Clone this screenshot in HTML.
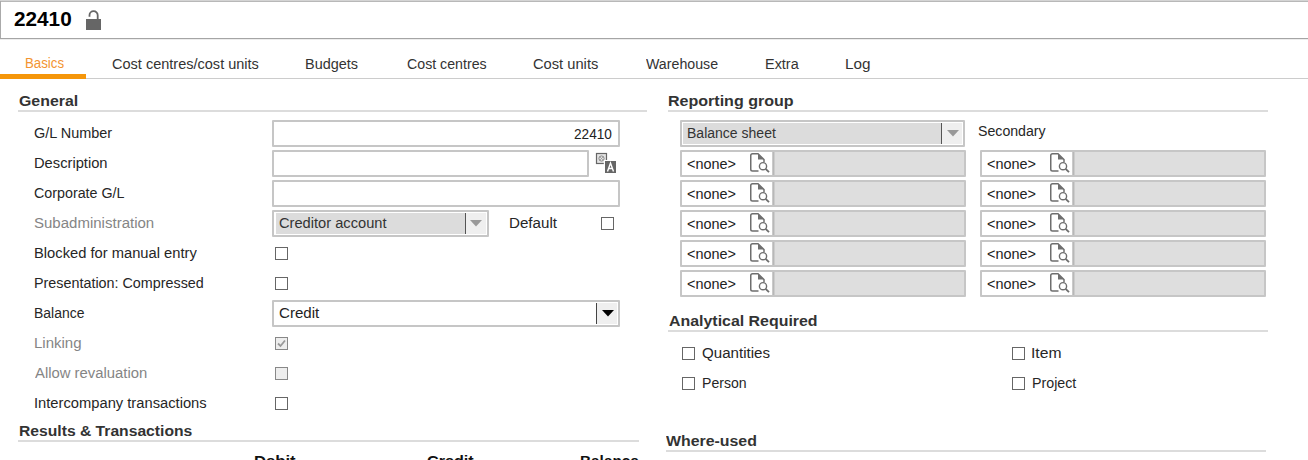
<!DOCTYPE html>
<html><head><meta charset="utf-8"><style>
html,body{margin:0;padding:0;background:#fff;width:1308px;height:460px;overflow:hidden;position:relative}
.tx{position:absolute;font-family:"Liberation Sans", sans-serif;line-height:1;white-space:nowrap;transform-origin:0 0}
.r{position:absolute}
</style></head><body>
<div class='r' style='left:0px;top:0px;width:1308px;height:1px;background:#d4d4d4;'></div>
<div class='r' style='left:0px;top:1px;width:1308px;height:1px;background:#b8b8b8;'></div>
<div class='r' style='left:0px;top:1px;width:1px;height:38px;background:#aaaaaa;'></div>
<div class='r' style='left:0px;top:38px;width:1308px;height:1px;background:#a5a5a5;'></div>
<div class='r' style='left:0px;top:39px;width:1308px;height:1px;background:#ededed;'></div>
<svg class='r' style='left:84px;top:8px' width='20' height='24' viewBox='0 0 20 24'>
<path d='M5.5 8.7 V7.3 A4.1 4.1 0 0 1 13.7 7.3 V11' fill='none' stroke='#666' stroke-width='1.8'/>
<rect x='2' y='11' width='15' height='11' fill='#666'/></svg>
<div class='r' style='left:86px;top:78px;width:1222px;height:1px;background:#cccccc;'></div>
<div class='r' style='left:0px;top:74px;width:86px;height:5px;background:#f5960a;'></div>
<div class='r' style='left:18px;top:110px;width:629px;height:2px;background:#dcdcdc;'></div>
<div class='r' style='left:668px;top:110px;width:600px;height:2px;background:#dcdcdc;'></div>
<div class='r' style='left:18px;top:440px;width:621px;height:2px;background:#dcdcdc;'></div>
<div class='r' style='left:668px;top:330px;width:600px;height:2px;background:#dcdcdc;'></div>
<div class='r' style='left:666px;top:450px;width:600px;height:2px;background:#dcdcdc;'></div>
<div class='r' style='left:272px;top:120px;width:344px;height:23px;border:2px solid #c6c6c6;background:#fff;border-radius:1px'></div>
<div class='r' style='left:272px;top:150px;width:313px;height:23px;border:2px solid #c6c6c6;background:#fff;border-radius:1px'></div>
<div class='r' style='left:272px;top:180px;width:344px;height:23px;border:2px solid #c6c6c6;background:#fff;border-radius:1px'></div>
<div class='r' style='left:272px;top:210px;width:213px;height:23px;border:2px solid #c6c6c6;background:#fff;border-radius:1px'></div>
<div class='r' style='left:276px;top:213px;width:189px;height:21px;background:#dcdcdc;'></div>
<div class='r' style='left:465px;top:213px;width:1px;height:21px;background:#555;'></div>
<div class='r' style='left:466px;top:213px;width:20px;height:21px;background:#efefef;'></div>
<svg class='r' style='left:470px;top:220px' width='12' height='7' viewBox='0 0 12 7'><path d='M0 0 H12 L6 6.5 Z' fill='#999'/></svg>
<svg class='r' style='left:595px;top:152px' width='22' height='22' viewBox='0 0 22 22'>
<rect x='1.5' y='1.5' width='10' height='10' fill='#e4e4e4' stroke='#666' stroke-width='1.2'/>
<circle cx='6.5' cy='6.5' r='2.6' fill='none' stroke='#888' stroke-width='1'/><path d='M4.5 4.5 L8.5 8.5 M8.5 4.5 L4.5 8.5' stroke='#999' stroke-width='0.8'/>
<rect x='8.8' y='8' width='13' height='14' fill='#fff'/>
<rect x='10' y='9' width='11' height='12' fill='#666'/>
<path d='M12.5 19.5 L15.5 11 L18.5 19.5 M13.6 16.5 H17.4' stroke='#fff' stroke-width='1.4' fill='none'/></svg>
<div class='r' style='left:601px;top:217px;width:11px;height:11px;border:1px solid #666;background:#fff'></div>
<div class='r' style='left:275px;top:247px;width:11px;height:11px;border:1px solid #666;background:#fff'></div>
<div class='r' style='left:275px;top:277px;width:11px;height:11px;border:1px solid #666;background:#fff'></div>
<div class='r' style='left:275px;top:337px;width:11px;height:11px;border:1px solid #888;background:#eee'></div>
<svg class='r' style='left:276px;top:338px' width='11' height='11' viewBox='0 0 11 11'><path d='M2 5.5 L4.5 8 L9 2.5' stroke='#999' stroke-width='1.8' fill='none'/></svg>
<div class='r' style='left:275px;top:367px;width:11px;height:11px;border:1px solid #888;background:#eee'></div>
<div class='r' style='left:275px;top:397px;width:11px;height:11px;border:1px solid #666;background:#fff'></div>
<div class='r' style='left:272px;top:300px;width:344px;height:23px;border:2px solid #c6c6c6;background:#fff;border-radius:1px'></div>
<div class='r' style='left:596px;top:303px;width:1px;height:21px;background:#444;'></div>
<div class='r' style='left:597px;top:303px;width:20px;height:21px;background:#efefef;'></div>
<svg class='r' style='left:602px;top:310px' width='12' height='7' viewBox='0 0 12 7'><path d='M0 0 H12 L6 6.5 Z' fill='#000'/></svg>
<div class='r' style='left:680px;top:120px;width:281px;height:23px;border:2px solid #c6c6c6;background:#fff;border-radius:1px'></div>
<div class='r' style='left:683px;top:123px;width:258px;height:21px;background:#dcdcdc;'></div>
<div class='r' style='left:941px;top:123px;width:1px;height:21px;background:#555;'></div>
<div class='r' style='left:942px;top:123px;width:20px;height:21px;background:#efefef;'></div>
<svg class='r' style='left:947px;top:130px' width='12' height='7' viewBox='0 0 12 7'><path d='M0 0 H12 L6 6.5 Z' fill='#999'/></svg>
<div class='r' style='left:680px;top:150px;width:282px;height:23px;border:2px solid #c6c6c6;background:#fff;border-radius:1px'></div>
<div class='r' style='left:772px;top:152px;width:1px;height:23px;background:#cacaca;'></div>
<div class='r' style='left:773px;top:152px;width:1px;height:23px;background:#b8b8b8;'></div>
<div class='r' style='left:774px;top:152px;width:1px;height:23px;background:#cccccc;'></div>
<div class='r' style='left:775px;top:152px;width:189px;height:23px;background:#dedede;'></div>
<svg class='r' style='left:746px;top:150px' width='28' height='26' viewBox='0 0 28 26'>
<path d='M12.5 21 H6.5 Q4.75 21 4.75 19.25 V5.5 Q4.75 3.75 6.5 3.75 H12 L18 9.5 V12' fill='none' stroke='#6e6e6e' stroke-width='1.5'/>
<path d='M12 3.75 L18 9.5 H12 Z' fill='#6e6e6e'/>
<circle cx='17' cy='16.2' r='3.6' fill='none' stroke='#6e6e6e' stroke-width='1.4'/>
<path d='M19.6 18.8 L23 22.2' stroke='#6e6e6e' stroke-width='1.8'/></svg>
<div class='r' style='left:980px;top:150px;width:282px;height:23px;border:2px solid #c6c6c6;background:#fff;border-radius:1px'></div>
<div class='r' style='left:1072px;top:152px;width:1px;height:23px;background:#cacaca;'></div>
<div class='r' style='left:1073px;top:152px;width:1px;height:23px;background:#b8b8b8;'></div>
<div class='r' style='left:1074px;top:152px;width:1px;height:23px;background:#cccccc;'></div>
<div class='r' style='left:1075px;top:152px;width:189px;height:23px;background:#dedede;'></div>
<svg class='r' style='left:1046px;top:150px' width='28' height='26' viewBox='0 0 28 26'>
<path d='M12.5 21 H6.5 Q4.75 21 4.75 19.25 V5.5 Q4.75 3.75 6.5 3.75 H12 L18 9.5 V12' fill='none' stroke='#6e6e6e' stroke-width='1.5'/>
<path d='M12 3.75 L18 9.5 H12 Z' fill='#6e6e6e'/>
<circle cx='17' cy='16.2' r='3.6' fill='none' stroke='#6e6e6e' stroke-width='1.4'/>
<path d='M19.6 18.8 L23 22.2' stroke='#6e6e6e' stroke-width='1.8'/></svg>
<div class='r' style='left:680px;top:180px;width:282px;height:23px;border:2px solid #c6c6c6;background:#fff;border-radius:1px'></div>
<div class='r' style='left:772px;top:182px;width:1px;height:23px;background:#cacaca;'></div>
<div class='r' style='left:773px;top:182px;width:1px;height:23px;background:#b8b8b8;'></div>
<div class='r' style='left:774px;top:182px;width:1px;height:23px;background:#cccccc;'></div>
<div class='r' style='left:775px;top:182px;width:189px;height:23px;background:#dedede;'></div>
<svg class='r' style='left:746px;top:180px' width='28' height='26' viewBox='0 0 28 26'>
<path d='M12.5 21 H6.5 Q4.75 21 4.75 19.25 V5.5 Q4.75 3.75 6.5 3.75 H12 L18 9.5 V12' fill='none' stroke='#6e6e6e' stroke-width='1.5'/>
<path d='M12 3.75 L18 9.5 H12 Z' fill='#6e6e6e'/>
<circle cx='17' cy='16.2' r='3.6' fill='none' stroke='#6e6e6e' stroke-width='1.4'/>
<path d='M19.6 18.8 L23 22.2' stroke='#6e6e6e' stroke-width='1.8'/></svg>
<div class='r' style='left:980px;top:180px;width:282px;height:23px;border:2px solid #c6c6c6;background:#fff;border-radius:1px'></div>
<div class='r' style='left:1072px;top:182px;width:1px;height:23px;background:#cacaca;'></div>
<div class='r' style='left:1073px;top:182px;width:1px;height:23px;background:#b8b8b8;'></div>
<div class='r' style='left:1074px;top:182px;width:1px;height:23px;background:#cccccc;'></div>
<div class='r' style='left:1075px;top:182px;width:189px;height:23px;background:#dedede;'></div>
<svg class='r' style='left:1046px;top:180px' width='28' height='26' viewBox='0 0 28 26'>
<path d='M12.5 21 H6.5 Q4.75 21 4.75 19.25 V5.5 Q4.75 3.75 6.5 3.75 H12 L18 9.5 V12' fill='none' stroke='#6e6e6e' stroke-width='1.5'/>
<path d='M12 3.75 L18 9.5 H12 Z' fill='#6e6e6e'/>
<circle cx='17' cy='16.2' r='3.6' fill='none' stroke='#6e6e6e' stroke-width='1.4'/>
<path d='M19.6 18.8 L23 22.2' stroke='#6e6e6e' stroke-width='1.8'/></svg>
<div class='r' style='left:680px;top:210px;width:282px;height:23px;border:2px solid #c6c6c6;background:#fff;border-radius:1px'></div>
<div class='r' style='left:772px;top:212px;width:1px;height:23px;background:#cacaca;'></div>
<div class='r' style='left:773px;top:212px;width:1px;height:23px;background:#b8b8b8;'></div>
<div class='r' style='left:774px;top:212px;width:1px;height:23px;background:#cccccc;'></div>
<div class='r' style='left:775px;top:212px;width:189px;height:23px;background:#dedede;'></div>
<svg class='r' style='left:746px;top:210px' width='28' height='26' viewBox='0 0 28 26'>
<path d='M12.5 21 H6.5 Q4.75 21 4.75 19.25 V5.5 Q4.75 3.75 6.5 3.75 H12 L18 9.5 V12' fill='none' stroke='#6e6e6e' stroke-width='1.5'/>
<path d='M12 3.75 L18 9.5 H12 Z' fill='#6e6e6e'/>
<circle cx='17' cy='16.2' r='3.6' fill='none' stroke='#6e6e6e' stroke-width='1.4'/>
<path d='M19.6 18.8 L23 22.2' stroke='#6e6e6e' stroke-width='1.8'/></svg>
<div class='r' style='left:980px;top:210px;width:282px;height:23px;border:2px solid #c6c6c6;background:#fff;border-radius:1px'></div>
<div class='r' style='left:1072px;top:212px;width:1px;height:23px;background:#cacaca;'></div>
<div class='r' style='left:1073px;top:212px;width:1px;height:23px;background:#b8b8b8;'></div>
<div class='r' style='left:1074px;top:212px;width:1px;height:23px;background:#cccccc;'></div>
<div class='r' style='left:1075px;top:212px;width:189px;height:23px;background:#dedede;'></div>
<svg class='r' style='left:1046px;top:210px' width='28' height='26' viewBox='0 0 28 26'>
<path d='M12.5 21 H6.5 Q4.75 21 4.75 19.25 V5.5 Q4.75 3.75 6.5 3.75 H12 L18 9.5 V12' fill='none' stroke='#6e6e6e' stroke-width='1.5'/>
<path d='M12 3.75 L18 9.5 H12 Z' fill='#6e6e6e'/>
<circle cx='17' cy='16.2' r='3.6' fill='none' stroke='#6e6e6e' stroke-width='1.4'/>
<path d='M19.6 18.8 L23 22.2' stroke='#6e6e6e' stroke-width='1.8'/></svg>
<div class='r' style='left:680px;top:240px;width:282px;height:23px;border:2px solid #c6c6c6;background:#fff;border-radius:1px'></div>
<div class='r' style='left:772px;top:242px;width:1px;height:23px;background:#cacaca;'></div>
<div class='r' style='left:773px;top:242px;width:1px;height:23px;background:#b8b8b8;'></div>
<div class='r' style='left:774px;top:242px;width:1px;height:23px;background:#cccccc;'></div>
<div class='r' style='left:775px;top:242px;width:189px;height:23px;background:#dedede;'></div>
<svg class='r' style='left:746px;top:240px' width='28' height='26' viewBox='0 0 28 26'>
<path d='M12.5 21 H6.5 Q4.75 21 4.75 19.25 V5.5 Q4.75 3.75 6.5 3.75 H12 L18 9.5 V12' fill='none' stroke='#6e6e6e' stroke-width='1.5'/>
<path d='M12 3.75 L18 9.5 H12 Z' fill='#6e6e6e'/>
<circle cx='17' cy='16.2' r='3.6' fill='none' stroke='#6e6e6e' stroke-width='1.4'/>
<path d='M19.6 18.8 L23 22.2' stroke='#6e6e6e' stroke-width='1.8'/></svg>
<div class='r' style='left:980px;top:240px;width:282px;height:23px;border:2px solid #c6c6c6;background:#fff;border-radius:1px'></div>
<div class='r' style='left:1072px;top:242px;width:1px;height:23px;background:#cacaca;'></div>
<div class='r' style='left:1073px;top:242px;width:1px;height:23px;background:#b8b8b8;'></div>
<div class='r' style='left:1074px;top:242px;width:1px;height:23px;background:#cccccc;'></div>
<div class='r' style='left:1075px;top:242px;width:189px;height:23px;background:#dedede;'></div>
<svg class='r' style='left:1046px;top:240px' width='28' height='26' viewBox='0 0 28 26'>
<path d='M12.5 21 H6.5 Q4.75 21 4.75 19.25 V5.5 Q4.75 3.75 6.5 3.75 H12 L18 9.5 V12' fill='none' stroke='#6e6e6e' stroke-width='1.5'/>
<path d='M12 3.75 L18 9.5 H12 Z' fill='#6e6e6e'/>
<circle cx='17' cy='16.2' r='3.6' fill='none' stroke='#6e6e6e' stroke-width='1.4'/>
<path d='M19.6 18.8 L23 22.2' stroke='#6e6e6e' stroke-width='1.8'/></svg>
<div class='r' style='left:680px;top:270px;width:282px;height:23px;border:2px solid #c6c6c6;background:#fff;border-radius:1px'></div>
<div class='r' style='left:772px;top:272px;width:1px;height:23px;background:#cacaca;'></div>
<div class='r' style='left:773px;top:272px;width:1px;height:23px;background:#b8b8b8;'></div>
<div class='r' style='left:774px;top:272px;width:1px;height:23px;background:#cccccc;'></div>
<div class='r' style='left:775px;top:272px;width:189px;height:23px;background:#dedede;'></div>
<svg class='r' style='left:746px;top:270px' width='28' height='26' viewBox='0 0 28 26'>
<path d='M12.5 21 H6.5 Q4.75 21 4.75 19.25 V5.5 Q4.75 3.75 6.5 3.75 H12 L18 9.5 V12' fill='none' stroke='#6e6e6e' stroke-width='1.5'/>
<path d='M12 3.75 L18 9.5 H12 Z' fill='#6e6e6e'/>
<circle cx='17' cy='16.2' r='3.6' fill='none' stroke='#6e6e6e' stroke-width='1.4'/>
<path d='M19.6 18.8 L23 22.2' stroke='#6e6e6e' stroke-width='1.8'/></svg>
<div class='r' style='left:980px;top:270px;width:282px;height:23px;border:2px solid #c6c6c6;background:#fff;border-radius:1px'></div>
<div class='r' style='left:1072px;top:272px;width:1px;height:23px;background:#cacaca;'></div>
<div class='r' style='left:1073px;top:272px;width:1px;height:23px;background:#b8b8b8;'></div>
<div class='r' style='left:1074px;top:272px;width:1px;height:23px;background:#cccccc;'></div>
<div class='r' style='left:1075px;top:272px;width:189px;height:23px;background:#dedede;'></div>
<svg class='r' style='left:1046px;top:270px' width='28' height='26' viewBox='0 0 28 26'>
<path d='M12.5 21 H6.5 Q4.75 21 4.75 19.25 V5.5 Q4.75 3.75 6.5 3.75 H12 L18 9.5 V12' fill='none' stroke='#6e6e6e' stroke-width='1.5'/>
<path d='M12 3.75 L18 9.5 H12 Z' fill='#6e6e6e'/>
<circle cx='17' cy='16.2' r='3.6' fill='none' stroke='#6e6e6e' stroke-width='1.4'/>
<path d='M19.6 18.8 L23 22.2' stroke='#6e6e6e' stroke-width='1.8'/></svg>
<div class='r' style='left:682px;top:347px;width:11px;height:11px;border:1px solid #666;background:#fff'></div>
<div class='r' style='left:682px;top:377px;width:11px;height:11px;border:1px solid #666;background:#fff'></div>
<div class='r' style='left:1012px;top:347px;width:11px;height:11px;border:1px solid #666;background:#fff'></div>
<div class='r' style='left:1012px;top:377px;width:11px;height:11px;border:1px solid #666;background:#fff'></div>
<div class='tx' style='left:13.76px;top:8.50px;font-size:20px;font-weight:bold;color:#000;transform:scaleX(1.0370)'>22410</div>
<div class='tx' style='left:25.15px;top:56.00px;font-size:14px;font-weight:normal;color:#f39431;transform:scaleX(0.9475)'>Basics</div>
<div class='tx' style='left:111.76px;top:57.00px;font-size:14px;font-weight:normal;color:#333;transform:scaleX(1.0371)'>Cost centres/cost units</div>
<div class='tx' style='left:305.37px;top:57.00px;font-size:14px;font-weight:normal;color:#333;transform:scaleX(1.0320)'>Budgets</div>
<div class='tx' style='left:406.99px;top:57.00px;font-size:14px;font-weight:normal;color:#333;transform:scaleX(1.0130)'>Cost centres</div>
<div class='tx' style='left:532.95px;top:57.00px;font-size:14px;font-weight:normal;color:#333;transform:scaleX(1.0492)'>Cost units</div>
<div class='tx' style='left:646.00px;top:57.00px;font-size:14px;font-weight:normal;color:#333;transform:scaleX(1.0141)'>Warehouse</div>
<div class='tx' style='left:764.97px;top:57.00px;font-size:14px;font-weight:normal;color:#333;transform:scaleX(1.0312)'>Extra</div>
<div class='tx' style='left:844.91px;top:57.00px;font-size:14px;font-weight:normal;color:#333;transform:scaleX(1.0909)'>Log</div>
<div class='tx' style='left:18.67px;top:93.50px;font-size:14px;font-weight:bold;color:#333;transform:scaleX(1.1340)'>General</div>
<div class='tx' style='left:18.68px;top:423.50px;font-size:14px;font-weight:bold;color:#333;transform:scaleX(1.1190)'>Results &amp; Transactions</div>
<div class='tx' style='left:668.45px;top:93.50px;font-size:14px;font-weight:bold;color:#333;transform:scaleX(1.1454)'>Reporting group</div>
<div class='tx' style='left:669.00px;top:313.50px;font-size:14px;font-weight:bold;color:#333;transform:scaleX(1.1369)'>Analytical Required</div>
<div class='tx' style='left:666.40px;top:433.50px;font-size:14px;font-weight:bold;color:#333;transform:scaleX(1.1342)'>Where-used</div>
<div class='tx' style='left:33.57px;top:126.00px;font-size:14px;font-weight:normal;color:#262626;transform:scaleX(1.0320)'>G/L Number</div>
<div class='tx' style='left:33.55px;top:156.00px;font-size:14px;font-weight:normal;color:#262626;transform:scaleX(1.0500)'>Description</div>
<div class='tx' style='left:33.58px;top:186.00px;font-size:14px;font-weight:normal;color:#262626;transform:scaleX(1.0205)'>Corporate G/L</div>
<div class='tx' style='left:33.53px;top:216.00px;font-size:14px;font-weight:normal;color:#858585;transform:scaleX(1.0727)'>Subadministration</div>
<div class='tx' style='left:33.55px;top:246.00px;font-size:14px;font-weight:normal;color:#262626;transform:scaleX(1.0513)'>Blocked for manual entry</div>
<div class='tx' style='left:33.58px;top:276.00px;font-size:14px;font-weight:normal;color:#262626;transform:scaleX(1.0244)'>Presentation: Compressed</div>
<div class='tx' style='left:33.60px;top:306.00px;font-size:14px;font-weight:normal;color:#262626;transform:scaleX(0.9959)'>Balance</div>
<div class='tx' style='left:33.53px;top:336.00px;font-size:14px;font-weight:normal;color:#858585;transform:scaleX(1.0721)'>Linking</div>
<div class='tx' style='left:34.60px;top:366.00px;font-size:14px;font-weight:normal;color:#858585;transform:scaleX(1.0610)'>Allow revaluation</div>
<div class='tx' style='left:33.55px;top:396.00px;font-size:14px;font-weight:normal;color:#262626;transform:scaleX(1.0515)'>Intercompany transactions</div>
<div class='tx' style='left:574.03px;top:127.00px;font-size:14px;font-weight:normal;color:#222;transform:scaleX(0.9737)'>22410</div>
<div class='tx' style='left:278.95px;top:216.00px;font-size:14px;font-weight:normal;color:#333;transform:scaleX(1.0471)'>Creditor account</div>
<div class='tx' style='left:509.42px;top:216.00px;font-size:14px;font-weight:normal;color:#262626;transform:scaleX(1.0814)'>Default</div>
<div class='tx' style='left:279.02px;top:306.00px;font-size:14px;font-weight:normal;color:#222;transform:scaleX(1.0778)'>Credit</div>
<div class='tx' style='left:686.80px;top:126.00px;font-size:14px;font-weight:normal;color:#333;transform:scaleX(1.0011)'>Balance sheet</div>
<div class='tx' style='left:977.99px;top:124.00px;font-size:14px;font-weight:normal;color:#262626;transform:scaleX(1.0106)'>Secondary</div>
<div class='tx' style='left:686.57px;top:157.00px;font-size:14px;font-weight:normal;color:#222;transform:scaleX(1.0304)'>&lt;none&gt;</div>
<div class='tx' style='left:986.57px;top:157.00px;font-size:14px;font-weight:normal;color:#222;transform:scaleX(1.0326)'>&lt;none&gt;</div>
<div class='tx' style='left:686.57px;top:187.00px;font-size:14px;font-weight:normal;color:#222;transform:scaleX(1.0304)'>&lt;none&gt;</div>
<div class='tx' style='left:986.57px;top:187.00px;font-size:14px;font-weight:normal;color:#222;transform:scaleX(1.0326)'>&lt;none&gt;</div>
<div class='tx' style='left:686.57px;top:217.00px;font-size:14px;font-weight:normal;color:#222;transform:scaleX(1.0304)'>&lt;none&gt;</div>
<div class='tx' style='left:986.57px;top:217.00px;font-size:14px;font-weight:normal;color:#222;transform:scaleX(1.0326)'>&lt;none&gt;</div>
<div class='tx' style='left:686.57px;top:247.00px;font-size:14px;font-weight:normal;color:#222;transform:scaleX(1.0304)'>&lt;none&gt;</div>
<div class='tx' style='left:986.57px;top:247.00px;font-size:14px;font-weight:normal;color:#222;transform:scaleX(1.0326)'>&lt;none&gt;</div>
<div class='tx' style='left:686.57px;top:277.00px;font-size:14px;font-weight:normal;color:#222;transform:scaleX(1.0304)'>&lt;none&gt;</div>
<div class='tx' style='left:986.57px;top:277.00px;font-size:14px;font-weight:normal;color:#222;transform:scaleX(1.0326)'>&lt;none&gt;</div>
<div class='tx' style='left:701.52px;top:346.00px;font-size:14px;font-weight:normal;color:#262626;transform:scaleX(1.0790)'>Quantities</div>
<div class='tx' style='left:702.00px;top:376.00px;font-size:14px;font-weight:normal;color:#262626;transform:scaleX(1.0047)'>Person</div>
<div class='tx' style='left:1031.48px;top:346.00px;font-size:14px;font-weight:normal;color:#262626;transform:scaleX(1.1200)'>Item</div>
<div class='tx' style='left:1031.58px;top:376.00px;font-size:14px;font-weight:normal;color:#262626;transform:scaleX(1.0163)'>Project</div>
<div class='tx' style='left:254.41px;top:454.00px;font-size:14px;font-weight:bold;color:#111;transform:scaleX(1.1882)'>Debit</div>
<div class='tx' style='left:426.85px;top:454.00px;font-size:14px;font-weight:bold;color:#111;transform:scaleX(1.1538)'>Credit</div>
<div class='tx' style='left:579.90px;top:454.00px;font-size:14px;font-weight:bold;color:#111;transform:scaleX(1.0962)'>Balance</div>
</body></html>
